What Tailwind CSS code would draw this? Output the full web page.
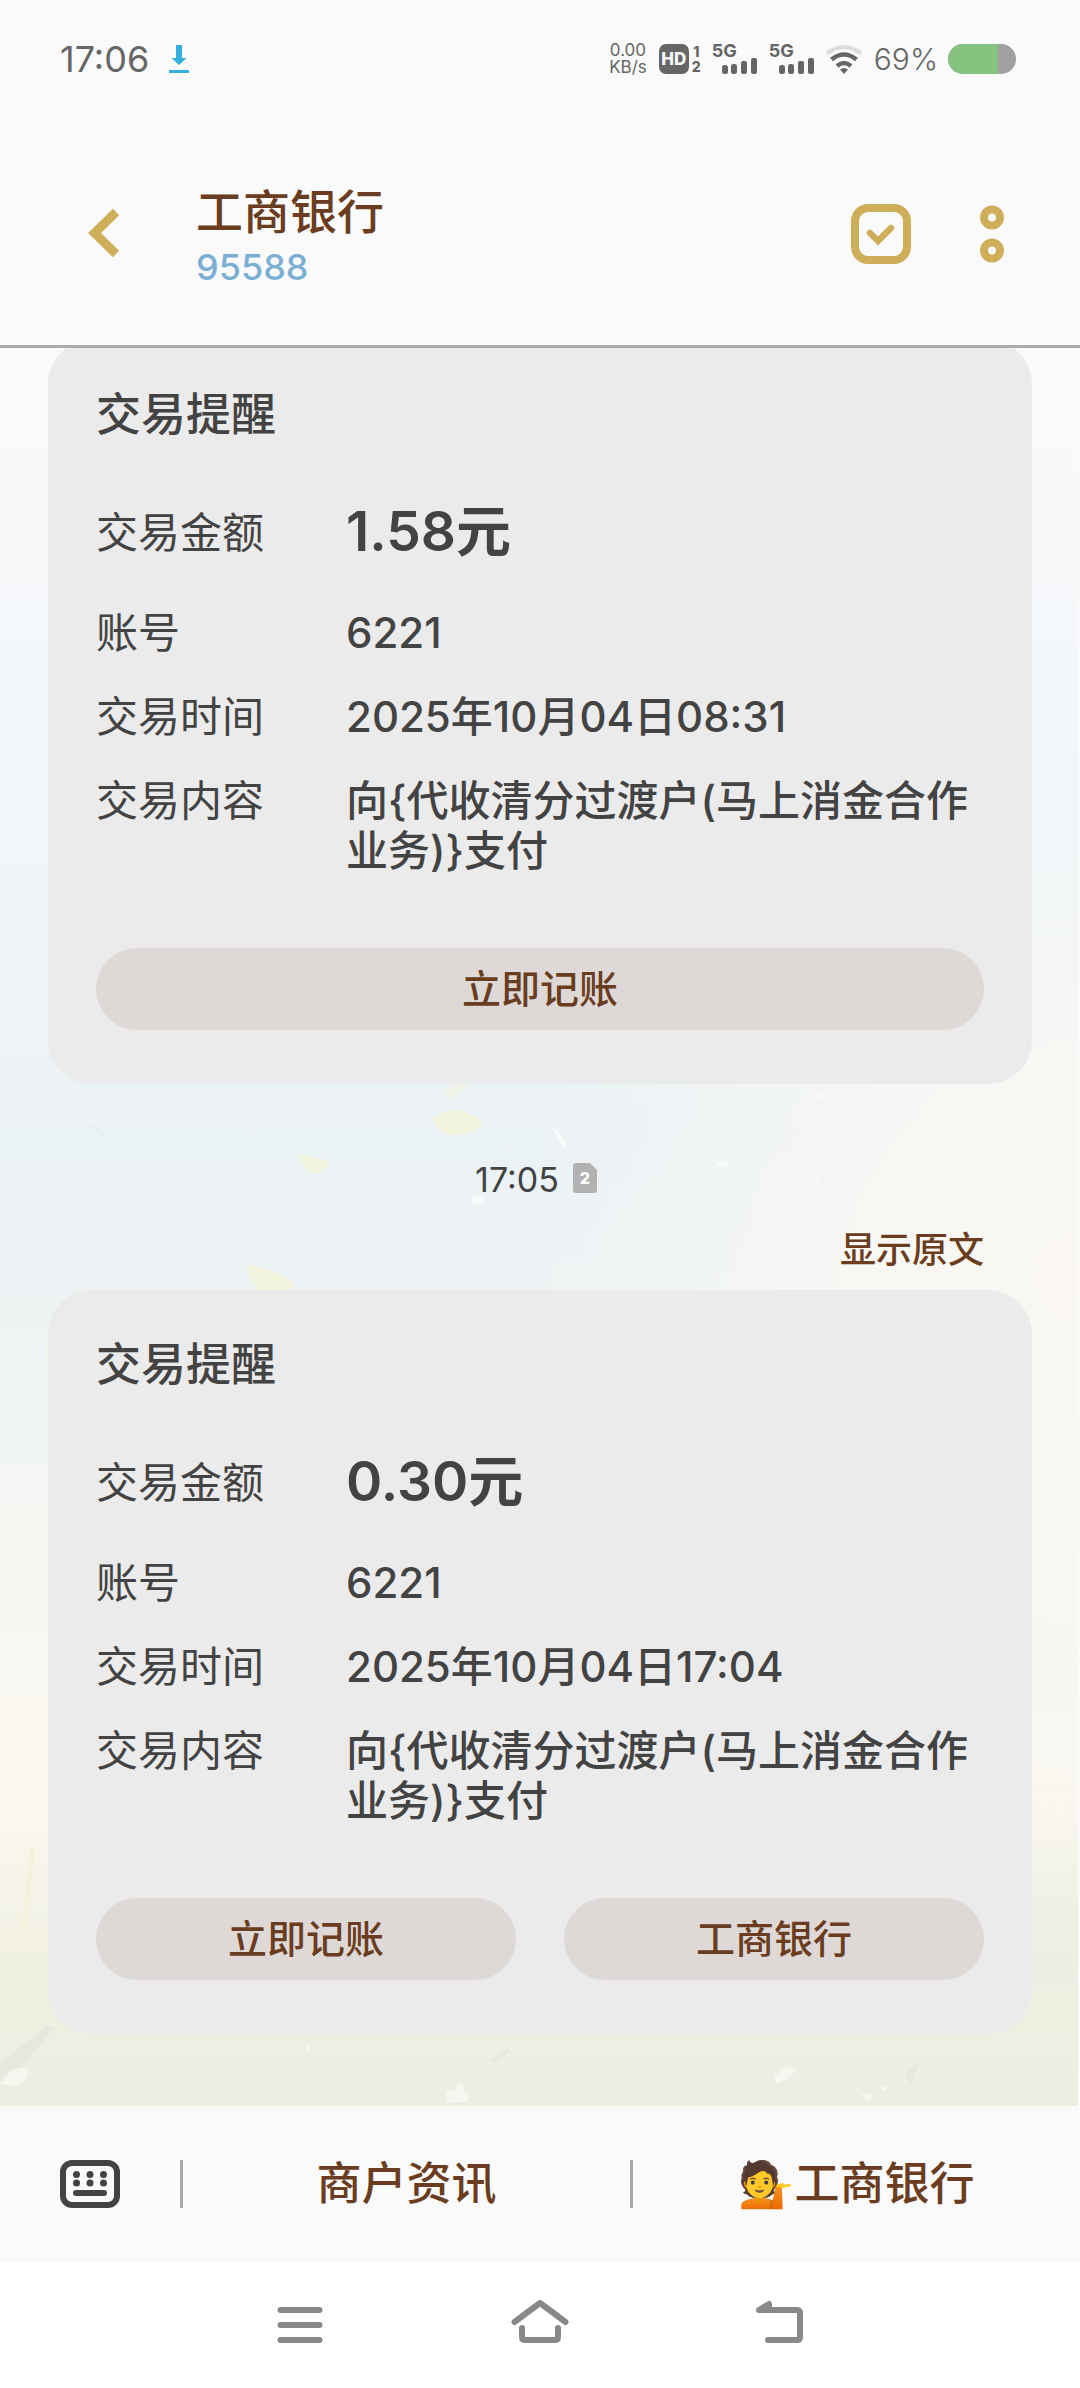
<!DOCTYPE html>
<html lang="zh-CN">

<head>
    <meta charset="UTF-8">
    <meta name="viewport" content="width=device-width, initial-scale=1.0">
    <script src="https://cdn.jsdelivr.net/npm/@tailwindcss/browser@4"></script>
    <title>工商银行</title>
</head>

<body class="flex min-h-screen flex-col bg-[#fafafa] font-['Inter','Noto_Sans_CJK_SC',sans-serif] text-[#434343]">
    <header class="relative z-10 border-b-3 border-[#ababab] bg-[#fafafa]">
        <!-- status bar -->
        <div class="flex h-[118px] items-center pl-[60px] pr-16 text-[#666]">
            <span class="text-[36px] leading-[48px]">17:06</span>
            <svg class="ml-5 h-7 w-5" viewBox="0 0 20 28" fill="#36b0de">
                <path d="M7 0h6v13h4.500L10 20 2.500 13H7z" />
                <path d="M0 25h20v3H0z" />
            </svg>
            <div class="ml-auto flex items-center">
                <div class="flex flex-col items-center text-[17px] leading-[17px]">
                    <span>0.00</span>
                    <span>KB/s</span>
                </div>
                <div class="ml-3 flex gap-[2px]">
                    <span class="flex size-[30px] items-center justify-center rounded-[7px] bg-[#666] text-[17px] leading-none font-extrabold text-[#fafafa]">HD</span>
                    <span class="flex w-[11px] flex-col items-center text-[14px] leading-[15px] font-extrabold"><span>1</span><span>2</span></span>
                </div>
                <div class="ml-[10px] flex gap-[12px]">
                    <div class="relative h-[30px] w-[45px]">
                        <span class="absolute top-0 left-0 text-[18px] leading-[14px] font-bold">5G</span>
                        <svg class="size-full" viewBox="0 0 45 30" fill="#666">
                            <rect x="10" y="21" width="6" height="9" rx="2.500" />
                            <rect x="19" y="20" width="6" height="10" rx="2.500" />
                            <rect x="29" y="17" width="6" height="13" rx="2" />
                            <rect x="39" y="14" width="6" height="16" rx="2" />
                        </svg>
                    </div>
                    <div class="relative h-[30px] w-[45px]">
                        <span class="absolute top-0 left-0 text-[18px] leading-[14px] font-bold">5G</span>
                        <svg class="size-full" viewBox="0 0 45 30" fill="#666">
                            <rect x="10" y="21" width="6" height="9" rx="2.500" />
                            <rect x="19" y="20" width="6" height="10" rx="2.500" />
                            <rect x="29" y="17" width="6" height="13" rx="2" />
                            <rect x="39" y="14" width="6" height="16" rx="2" />
                        </svg>
                    </div>
                </div>
                <svg class="ml-3 h-[30px] w-9" viewBox="0 0 36 30" fill="none" stroke-width="4">
                    <path d="M1 9.500Q18-3.500 35 9.500" stroke="#dcdcdc" />
                    <path d="M5.500 15.500Q18 5.500 30.500 15.500M11 22Q18 16 25 22" stroke="#666" stroke-width="4.500" />
                    <path d="M14 25.500Q18 22.500 22 25.500L18 30z" fill="#666" />
                </svg>
                <span class="ml-3 text-[30px] leading-[36px] font-light">69%</span>
                <div class="ml-[10px] h-[30px] w-[68px] overflow-hidden rounded-full bg-[#a0a0a0]">
                    <div class="h-full bg-[#86c280]" style="width: 73%"></div>
                </div>
            </div>
        </div>
        <!-- title bar -->
        <div class="flex h-[227px] items-start px-[76px] pt-[66px]">
            <button type="button" aria-label="返回" class="mt-6 w-14 pl-3">
                <svg class="h-[50px] w-8" viewBox="0 0 32 50" fill="none" stroke="#ceae58" stroke-width="9">
                    <path d="M28 4L6.500 25 28 46" />
                </svg>
            </button>
            <div class="ml-16">
                <h1 class="text-[47px] leading-[56px] font-medium text-[#6b3d20]">工商银行</h1>
                <a href="tel:95588" class="block text-[36px] leading-[54px] font-medium text-[#7bafd4]">95588</a>
            </div>
            <button type="button" aria-label="选择" class="mt-5 ml-auto">
                <svg class="size-[60px]" viewBox="0 0 60 60" fill="none" stroke="#ceae58">
                    <rect x="4" y="4" width="52" height="52" rx="13" stroke-width="8" />
                    <path d="M19 29L27 37 40 24" stroke-width="6.500" stroke-linecap="round" />
                </svg>
            </button>
            <button type="button" aria-label="更多" class="mt-5 ml-[69px]">
                <svg class="h-[60px] w-6" viewBox="0 0 24 60" fill="none" stroke="#ceae58" stroke-width="8">
                    <circle cx="12" cy="13.500" r="8" />
                    <circle cx="12" cy="46.500" r="8" />
                </svg>
            </button>
        </div>
    </header>

    <main class="relative flex-1 px-12 pb-[72px]">
        <!-- wallpaper -->
        <svg class="absolute inset-0 h-full w-full" viewBox="0 0 1080 1758" preserveAspectRatio="none">
            <defs>
                <linearGradient id="sky" x1="0" y1="0" x2="0" y2="1">
                    <stop offset="0" stop-color="#fafafa" />
                    <stop offset="0.250" stop-color="#f2f6fa" />
                    <stop offset="0.450" stop-color="#ebf2f5" />
                    <stop offset="0.580" stop-color="#eef4f3" />
                    <stop offset="0.700" stop-color="#f7f7f2" />
                    <stop offset="0.840" stop-color="#faf7ee" />
                    <stop offset="0.920" stop-color="#f0f0e2" />
                    <stop offset="1" stop-color="#ebeee1" />
                </linearGradient>
                <radialGradient id="cloud" gradientUnits="userSpaceOnUse" cx="1080" cy="930" r="560">
                    <stop offset="0" stop-color="#faf7f2" />
                    <stop offset="0.400" stop-color="#f9f8f4" stop-opacity="0.850" />
                    <stop offset="1" stop-color="#f3f5f4" stop-opacity="0" />
                </radialGradient>
                <linearGradient id="grass" x1="0" y1="0" x2="0" y2="1">
                    <stop offset="0" stop-color="#edf0e4" stop-opacity="0" />
                    <stop offset="1" stop-color="#ebeee2" />
                </linearGradient>
            </defs>
            <rect width="1080" height="1758" fill="url(#sky)" />
            <circle cx="1080" cy="930" r="560" fill="url(#cloud)" />
            <path d="M1032 1450L1042 1480 1050 1445 1056 1500 1066 1452 1080 1490V1640H1032z" fill="url(#grass)" />
            <g fill="#f3f4de">
                <path d="M433 770q18-14 38-3q12 5 12 10q-18 12-34 10q-14-4-16-17z" />
                <path d="M296 808q10-3 18 2q12 0 16 6q-8 12-20 9q-6-10-14-17z" />
                <path d="M247 917q24 4 36 11q10 6 12 10l-14 7h-20q-12-12-14-28z" />
                <path d="M48 987q8-16 18-24l-4 24-16 30z" />
                <path d="M442 745l10-9h16l-14 17z" fill="#eff2e8" />
            </g>
            <g fill="#f7faf9">
                <path d="M552 780l6 2 10 16-5 2z" />
                <ellipse cx="722" cy="816" rx="6" ry="3" />
                <ellipse cx="478" cy="852" rx="8" ry="4" />
                <circle cx="820" cy="748" r="3" />
                <circle cx="817" cy="832" r="3" />
            </g>
            <path d="M88 778l4-1 17 12-4 3z" fill="#e6eeee" />
            <path d="M30 1498l5 2-6 60-2 20h-6z" fill="#f3f3dd" />
            <path d="M0 1716L48 1677 54 1680 22 1718 0 1728zM490 1712l18-12 2 3-14 11zM905 1725l14-10-8 22z" fill="#e5e8dd" />
            <path d="M0 1736L12 1722q14-6 16 2q0 8-12 14zM446 1744q4-3 8 0l4-10 6 4-1 5 6 5-2 6h-10l-10 1zM774 1729l12-10 11 1-8 10-12 6zM861 1746h12l-5 8zM880 1740l8-2-2 6z" fill="#f5f7f0" />
            <circle cx="308" cy="1700" r="2" fill="#f7f9f0" />
            <rect x="1078" width="2" height="1758" fill="#fafafa" />
        </svg>

        <div class="relative">
            <section class="-mt-2 rounded-[44px] bg-[#ebebeb] px-12 pt-12 pb-[54px]">
                <h2 class="text-[45px] leading-[54px] font-medium">交易提醒</h2>
                <dl class="mt-14 grid grid-cols-[250px_1fr] text-[42px] leading-[50px]">
                    <dt class="mb-10 leading-[70px]">交易金额</dt>
                    <dd class="mb-11 text-[55px] leading-[66px] font-semibold">1.58元</dd>
                    <dt class="mb-[34px]">账号</dt>
                    <dd class="mb-[34px] font-medium">6221</dd>
                    <dt class="mb-[34px]">交易时间</dt>
                    <dd class="mb-[34px] font-medium">2025年10月04日08:31</dd>
                    <dt>交易内容</dt>
                    <dd class="font-medium">向{代收清分过渡户(马上消金合作业务)}支付</dd>
                </dl>
                <div class="mt-[72px] flex gap-12">
                    <button type="button" class="h-[82px] flex-1 rounded-full bg-[#ded9d7] text-[39px] font-medium text-[#6b3d20]">立即记账</button>
                </div>
            </section>

            <div class="flex items-center justify-center gap-[14px] pt-[72px] pr-2">
                <time class="text-[34px] leading-[48px]">17:05</time>
                <span class="relative mb-1 flex h-[30px] w-6 items-center justify-center">
                    <svg class="absolute inset-0 size-full" viewBox="0 0 24 30" fill="#b2b2b2">
                        <path d="M3 0H17L24 7V27q0 3-3 3H3q-3 0-3-3V3q0-3 3-3z" />
                    </svg>
                    <span class="relative text-[16px] leading-none font-extrabold text-white">2</span>
                </span>
            </div>
            <div class="mt-[22px] mb-4 flex justify-end px-12">
                <a href="#" class="text-[36px] leading-[48px] font-medium text-[#6b3d20]">显示原文</a>
            </div>

            <section class="rounded-[44px] bg-[#ebebeb] px-12 pt-12 pb-[54px]">
                <h2 class="text-[45px] leading-[54px] font-medium">交易提醒</h2>
                <dl class="mt-14 grid grid-cols-[250px_1fr] text-[42px] leading-[50px]">
                    <dt class="mb-10 leading-[70px]">交易金额</dt>
                    <dd class="mb-11 text-[55px] leading-[66px] font-semibold">0.30元</dd>
                    <dt class="mb-[34px]">账号</dt>
                    <dd class="mb-[34px] font-medium">6221</dd>
                    <dt class="mb-[34px]">交易时间</dt>
                    <dd class="mb-[34px] font-medium">2025年10月04日17:04</dd>
                    <dt>交易内容</dt>
                    <dd class="font-medium">向{代收清分过渡户(马上消金合作业务)}支付</dd>
                </dl>
                <div class="mt-[72px] flex gap-12">
                    <button type="button" class="h-[82px] flex-1 rounded-full bg-[#ded9d7] text-[39px] font-medium text-[#6b3d20]">立即记账</button>
                    <button type="button" class="h-[82px] flex-1 rounded-full bg-[#ded9d7] text-[39px] font-medium text-[#6b3d20]">工商银行</button>
                </div>
            </section>
        </div>
    </main>

    <!-- service menu -->
    <div class="relative flex h-[156px] items-center bg-[#fafafa] text-[45px] font-medium text-[#6b3d20]">
        <button type="button" aria-label="键盘" class="flex w-[180px] justify-center">
            <svg class="h-12 w-[60px]" viewBox="0 0 60 48" fill="#434343">
                <rect x="3" y="3" width="54" height="42" rx="9" fill="none" stroke="#434343" stroke-width="6" />
                <circle cx="16.500" cy="14.500" r="3.500" />
                <circle cx="30" cy="14.500" r="3.500" />
                <circle cx="43.500" cy="14.500" r="3.500" />
                <circle cx="16.500" cy="23" r="3.500" />
                <circle cx="30" cy="23" r="3.500" />
                <circle cx="43.500" cy="23" r="3.500" />
                <rect x="13" y="30" width="34" height="6" rx="3" />
            </svg>
        </button>
        <button type="button" class="flex h-12 flex-1 items-center justify-center border-l-3 border-[#aaa8a8]">商户资讯</button>
        <button type="button" class="flex h-12 flex-1 items-center justify-center border-l-3 border-[#aaa8a8]">💁工商银行</button>
    </div>

    <!-- system navigation -->
    <nav class="relative flex h-[126px] items-center justify-center gap-[180px] bg-white">
        <button type="button" aria-label="最近任务">
            <svg class="size-[60px]" viewBox="0 0 60 60" fill="none" stroke="#898989" stroke-width="6" stroke-linecap="round">
                <path d="M10.500 15h39M10.500 30h39M10.500 45h39" />
            </svg>
        </button>
        <button type="button" aria-label="主页">
            <svg class="size-[60px]" viewBox="0 0 60 60" fill="none" stroke="#898989" stroke-width="6" stroke-linecap="round" stroke-linejoin="round">
                <path d="M4.500 27L30 8 55.500 27M12 33v9q0 3 3 3h30q3 0 3-3v-9" />
            </svg>
        </button>
        <button type="button" aria-label="返回上一级">
            <svg class="size-[60px]" viewBox="0 0 60 60" fill="none" stroke="#898989" stroke-width="6" stroke-linecap="round" stroke-linejoin="round">
                <path d="M18 45h29q3 0 3-3V18q0-3-3-3H9L19 9v4" />
            </svg>
        </button>
    </nav>
</body>

</html>
